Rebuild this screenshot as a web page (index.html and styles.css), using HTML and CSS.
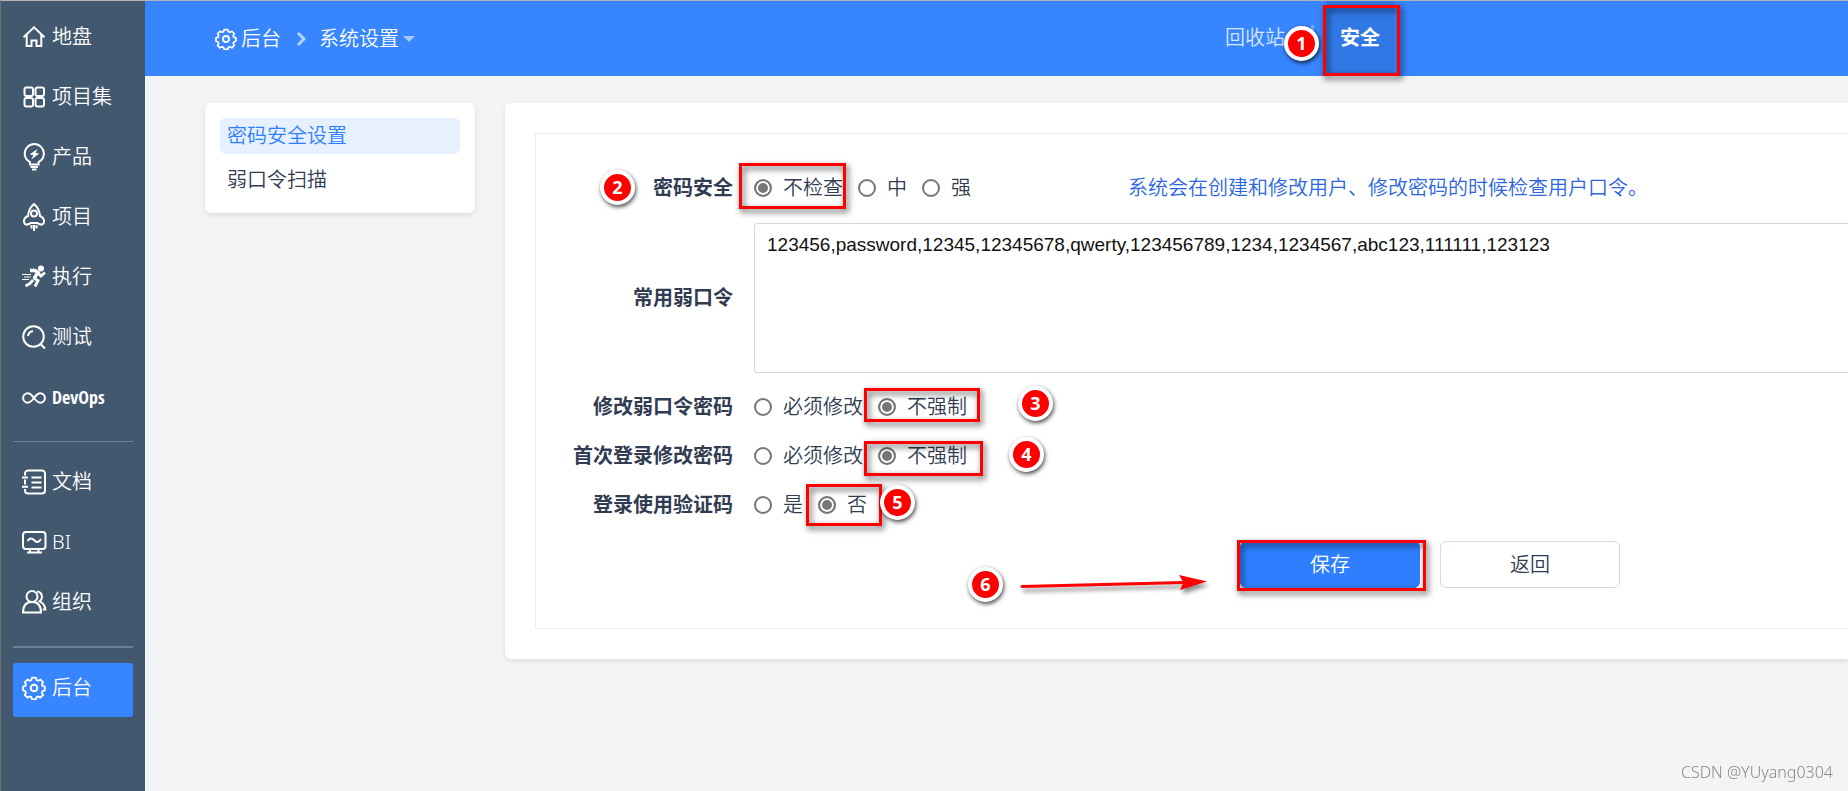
FILE: index.html
```html
<!DOCTYPE html>
<html lang="zh-CN">
<head>
<meta charset="utf-8">
<title>密码安全设置</title>
<link rel="stylesheet" href="styles.css">
</head>
<body>
<svg class="defs" aria-hidden="true">
  <symbol id="gear" viewBox="0 0 24 24"><path d="M9.9 1.2h4.2l.8 2.6 1.700.7 2.400-1.300 2.900 2.900-1.300 2.400.7 1.700 2.500.8v4.100l-2.500.8-.7 1.700 1.300 2.400-2.900 2.900-2.400-1.300-1.700.7-.8 2.500H9.900l-.8-2.500-1.700-.7L5 22.900l-2.900-2.900 1.300-2.400-.7-1.700-2.500-.8V11l2.500-.8.7-1.700L2.100 6.100 5 3.200l2.400 1.300 1.700-.7z" transform="translate(.9 .6) scale(.92)" stroke-linejoin="round"/><circle cx="12" cy="12" r="3.300"/></symbol>
</svg>
<div class="app">
  <nav class="sidebar" aria-label="主导航">
    <a class="side-item" href="#"><svg class="icon" viewBox="0 0 24 24"><path d="M1.500 12.200 12 2.300l10.500 9.900M4.700 10v11h4.800v-5.500h5V21h4.800V10"/></svg>地盘</a>
    <a class="side-item" href="#"><svg class="icon" viewBox="0 0 24 24"><rect x="2.500" y="2.500" width="8.500" height="8.500" rx="2"/><rect x="13.500" y="2.500" width="8.500" height="8.500" rx="2"/><rect x="2.500" y="13" width="8.500" height="8.500" rx="2"/><rect x="13.500" y="13" width="8.500" height="8.500" rx="2"/></svg>项目集</a>
    <a class="side-item" href="#"><svg class="icon" viewBox="0 0 24 24"><path d="M8 19.500v-2.300C4.500 15 2.700 12.200 2.700 8.700a9.600 9.600 0 0 1 19.200 0c0 3.500-1.800 6.300-5.300 8.500v2.300zM8.500 22h7.500M10 24.500h4.500"/><path class="solid" d="m15.500 4-8 5.500 3.800.5-2 4.500 8-6-3.800-.5z"/></svg>产品</a>
    <a class="side-item" href="#"><svg class="icon" viewBox="0 0 24 24"><path d="M7 19c-3 1.500-5.500 0-5-3.500.2-2 1.500-3.500 4-4.500C6.500 5.500 9 1.500 12-1c3 2.500 5.500 6.500 6 12 2.500 1 3.800 2.500 4 4.500.5 3.500-2 5-5 3.500l-1.500-1h-7zM9.500 20v3.500M12 20v6M14.500 20v3.500"/><circle cx="12" cy="8.500" r="3"/></svg>项目</a>
    <a class="side-item" href="#"><svg class="icon" viewBox="0 0 24 24"><circle class="solid" cx="19" cy="3.500" r="3"/><path d="M8 5.500h5l3 2-4 6" stroke-width="3.500"/><path d="m16 8 3 3 4-3.500M11.500 13l4.500 2.500-3 6M11 15l-3 3.500-4.500 2.500" stroke-width="2.800"/><path d="M0 9.500h9M2 12h7M0 14.500h7" stroke-width="1"/></svg>执行</a>
    <a class="side-item" href="#"><svg class="icon" viewBox="0 0 24 24"><circle cx="11.500" cy="11.500" r="10.300"/><path d="m18.500 19 4.500 4.500M6 11a6 6 0 0 1 5-5"/></svg>测试</a>
    <a class="side-item" href="#"><svg class="icon" viewBox="0 0 24 24"><path d="M12 13C9.500 9.800 8 8.300 5.800 8.300a4.700 4.700 0 0 0 0 9.400C8 17.700 9.500 16.200 12 13s4-4.700 6.200-4.700a4.700 4.700 0 0 1 0 9.400c-2.200 0-3.700-1.500-6.200-4.700z"/></svg><span class="narrow">DevOps</span></a>
    <hr class="rule">
    <a class="side-item" href="#"><svg class="icon" viewBox="0 0 24 24"><path d="M3 5.500V3.500a3 3 0 0 1 3-3h14a3 3 0 0 1 3 3v17a3 3 0 0 1-3 3H6a3 3 0 0 1-3-3v-1.500M3 9.500v5M0 7.500h6M0 16.800h6M9.500 7.500h10M9.500 12.500h10M9.500 17.500h10"/></svg>文档</a>
    <a class="side-item" href="#"><svg class="icon" viewBox="0 0 24 24"><rect x="1" y="2" width="22.500" height="17" rx="3"/><path d="M5.500 11c2-3 4-3.500 6.500-1s4.500 3 7-1M8 19v3M16.500 19v3M5 22.500h15"/></svg>BI</a>
    <a class="side-item" href="#"><svg class="icon" viewBox="0 0 24 24"><circle cx="10" cy="6.500" r="5.500"/><path d="M1 22.500c0-7 3.500-10.500 9-10.500s9 3.500 9 10.500zM15 1.500c5.500.5 6.500 7 2.500 9.800 3.500 1.500 5.500 4 5.800 8.200h-2.500"/></svg>组织</a>
    <hr class="rule rule-thick">
    <a class="side-item active" href="#" aria-current="page"><svg class="icon"><use href="#gear"/></svg>后台</a>
  </nav>
  <div class="page">
    <header class="topbar">
      <div class="crumbs">
        <a class="crumb" href="#"><svg class="icon icon-small"><use href="#gear"/></svg>后台</a>
        <svg class="chevron" viewBox="0 0 10 14"><path d="m2 1 6 6-6 6"/></svg>
        <a class="crumb" href="#">系统设置<svg class="caret" viewBox="0 0 12 6"><path d="M0 0h12L6 6z"/></svg></a>
      </div>
      <nav class="tabs" aria-label="系统设置">
        <a class="tab" href="#">回收站</a>
        <span class="tab-divider"></span>
        <a class="tab tab-active" href="#">安全</a>
      </nav>
    </header>
    <main class="content">
      <nav class="submenu" aria-label="安全">
        <a class="submenu-item selected" href="#">密码安全设置</a>
        <a class="submenu-item" href="#">弱口令扫描</a>
      </nav>
      <section class="card">
        <form class="form">
          <div class="row" role="radiogroup" aria-labelledby="l-mode">
            <span class="label" id="l-mode">密码安全</span>
            <div class="options options-wide">
              <label class="option"><input type="radio" name="mode" checked>不检查</label>
              <label class="option"><input type="radio" name="mode">中</label>
              <label class="option"><input type="radio" name="mode">强</label>
            </div>
            <span class="help">系统会在创建和修改用户、修改密码的时候检查用户口令。</span>
          </div>
          <div class="row row-text">
            <label class="label" for="weak">常用弱口令</label>
            <textarea class="weak" id="weak">123456,password,12345,12345678,qwerty,123456789,1234,1234567,abc123,111111,123123</textarea>
          </div>
          <div class="row" role="radiogroup" aria-labelledby="l-weak">
            <span class="label" id="l-weak">修改弱口令密码</span>
            <div class="options">
              <label class="option"><input type="radio" name="modify">必须修改</label>
              <label class="option"><input type="radio" name="modify" checked>不强制</label>
            </div>
          </div>
          <div class="row" role="radiogroup" aria-labelledby="l-first">
            <span class="label" id="l-first">首次登录修改密码</span>
            <div class="options">
              <label class="option"><input type="radio" name="first">必须修改</label>
              <label class="option"><input type="radio" name="first" checked>不强制</label>
            </div>
          </div>
          <div class="row" role="radiogroup" aria-labelledby="l-captcha">
            <span class="label" id="l-captcha">登录使用验证码</span>
            <div class="options">
              <label class="option"><input type="radio" name="captcha">是</label>
              <label class="option"><input type="radio" name="captcha" checked>否</label>
            </div>
          </div>
          <div class="actions">
            <button class="button primary" type="submit">保存</button>
            <button class="button" type="button">返回</button>
          </div>
        </form>
      </section>
    </main>
  </div>
</div>
<div class="notes">
  <span class="frame frame-1"></span><span class="badge badge-1">1</span>
  <span class="frame frame-2"></span><span class="badge badge-2">2</span>
  <span class="frame frame-3"></span><span class="badge badge-3">3</span>
  <span class="frame frame-4"></span><span class="badge badge-4">4</span>
  <span class="frame frame-5"></span><span class="badge badge-5">5</span>
  <span class="frame frame-6"></span><span class="badge badge-6">6</span>
  <svg class="arrow" viewBox="0 0 190 20"><path d="M4 12.500 166 8.500" stroke="#f00" stroke-width="3" stroke-linecap="round"/><path d="m161 1 28 6.500-27 8.500 3.500-7.500z" fill="#f00"/></svg>
</div>
<span class="watermark">CSDN @YUyang0304</span>
</body>
</html>
```
FILE: styles.css
```css
* { box-sizing: border-box; }

body {
  margin: 0;
  font-family: "Noto Sans", "Noto Sans CJK SC", sans-serif;
  font-size: 20px;
  font-weight: 350;
  line-height: 24px;
  color: #313c52;
  background: #f3f4f6;
}

a { color: inherit; text-decoration: none; }
.defs { position: absolute; width: 0; height: 0; }

.app {
  display: flex;
  min-height: 100vh;
  border-top: 1px solid #b4b4b4;
  border-left: 1px solid #747170;
}

.sidebar {
  flex: none;
  width: 144px;
  padding: 11px 12px;
  background: #42586f;
  color: #fff;
}
.side-item {
  display: flex;
  align-items: center;
  gap: 6px;
  height: 54px;
  margin-bottom: 6px;
  padding: 0 9px 4px;
  border-radius: 3px;
}
.side-item.active { background: #3785ff; }
.icon {
  flex: none;
  width: 24px;
  height: 24px;
  overflow: visible;
  fill: none;
  stroke: currentColor;
  stroke-width: 2;
}
.icon .solid { fill: currentColor; stroke: none; }
.icon-small { width: 22px; height: 22px; }
.narrow { font-family: "Liberation Sans Narrow", "Open Sans Condensed", sans-serif; font-size: 18px; }
.rule {
  height: 1px;
  margin: 15px 0;
  border: 0;
  background: #6b7e92;
}
.rule-thick { height: 2px; }

.page { flex: 1; min-width: 0; }
.topbar {
  display: flex;
  height: 75px;
  background: #3785ff;
  color: #fff;
}
.crumbs {
  display: flex;
  align-items: center;
  flex: none;
  width: 1066px;
  padding-left: 70px;
}
.crumb { display: flex; align-items: center; gap: 4px; }
.chevron { width: 10px; height: 14px; margin: 0 13px 0 15px; fill: none; stroke: #b5d2ff; stroke-width: 3; }
.caret { width: 12px; height: 6px; fill: #a8caff; }
.tabs { display: flex; align-items: center; gap: 12px; }
.tab { height: 75px; padding: 0 14px; line-height: 74px; color: #d7e7ff; }
.tab-active { background: #3078e6; color: #fff; font-weight: 700; }
.tab-divider { width: 3px; height: 27px; background: #78adff; }

.content { display: flex; align-items: flex-start; gap: 30px; padding: 27px 0 27px 60px; }
.submenu {
  display: flex;
  flex-direction: column;
  flex: none;
  gap: 8px;
  width: 270px;
  padding: 15px;
  border-radius: 6px;
  background: #fff;
  box-shadow: 0 2px 5px rgba(0, 0, 0, 0.1);
}
.submenu-item { padding: 6px 7px; border-radius: 6px; }
.submenu-item.selected { background: #e6f0ff; color: #2e7fff; }

.card {
  flex: 1;
  min-width: 0;
  padding: 30px 0 30px 30px;
  border-radius: 6px 0 0 6px;
  background: #fff;
  box-shadow: 0 2px 5px rgba(0, 0, 0, 0.1);
}
.form { padding: 29px 0 40px; border: 1px solid #ededed; border-right: 0; }
.row { display: flex; align-items: center; gap: 21px; min-height: 49px; }
.row-text { margin: 11px 0 9px; }
.label { flex: none; width: 197px; text-align: right; font-weight: 700; }
.options { display: flex; gap: 15px; }
.options-wide { min-width: 353px; }
.option { display: flex; align-items: center; gap: 11px; }
.option input {
  appearance: none;
  width: 18px;
  height: 18px;
  margin: 0;
  border: 2px solid #767676;
  border-radius: 50%;
  background: #fff;
}
.option input:checked { background: #767676; box-shadow: inset 0 0 0 2px #fff; }
.help { color: #2b65e2; white-space: nowrap; }
.weak {
  flex: 1;
  height: 150px;
  padding: 9px 12px;
  border: 1px solid #d8d8d8;
  border-right: 0;
  border-radius: 3px 0 0 3px;
  font: 19px/24px "Liberation Sans", sans-serif;
  color: #111;
  resize: none;
}
.actions { display: flex; gap: 20px; margin-top: 12px; padding-left: 704px; }
.button {
  width: 180px;
  height: 47px;
  border: 1px solid #d8dbde;
  border-radius: 6px;
  background: #fff;
  font: inherit;
  color: inherit;
}
.button.primary { border-color: #2e7fff; background: #2e7fff; color: #fff; }

.notes { position: absolute; top: 0; left: 0; pointer-events: none; }
.frame {
  position: absolute;
  border: 3px solid #f00;
  filter: drop-shadow(2px 3px 3px rgba(0, 0, 0, 0.7));
}
.frame-1 { left: 1323px; top: 5px; width: 77px; height: 71px; }
.frame-2 { left: 739px; top: 163px; width: 107px; height: 46px; }
.frame-3 { left: 864px; top: 388px; width: 116px; height: 34px; }
.frame-4 { left: 864px; top: 441px; width: 119px; height: 35px; }
.frame-5 { left: 806px; top: 484px; width: 76px; height: 42px; }
.frame-6 { left: 1237px; top: 540px; width: 189px; height: 51px; }
.badge {
  position: absolute;
  width: 35px;
  height: 35px;
  border: 4px solid #fff;
  border-radius: 50%;
  background: #f00;
  box-shadow: 1px 2px 4px rgba(0, 0, 0, 0.7);
  color: #fff;
  font: 700 18px/26px "Open Sans", sans-serif;
  text-align: center;
}
.badge-1 { left: 1284px; top: 26px; }
.badge-2 { left: 600px; top: 170px; }
.badge-3 { left: 1018px; top: 386px; }
.badge-4 { left: 1009px; top: 437px; }
.badge-5 { left: 880px; top: 485px; }
.badge-6 { left: 968px; top: 567px; }
.arrow {
  position: absolute;
  left: 1018px;
  top: 574px;
  width: 190px;
  height: 20px;
  overflow: visible;
  filter: drop-shadow(2px 4px 2px rgba(0, 0, 0, 0.45));
}
.watermark { position: fixed; right: 15px; bottom: 7px; font-size: 16px; font-weight: 300; color: #888; }
```
